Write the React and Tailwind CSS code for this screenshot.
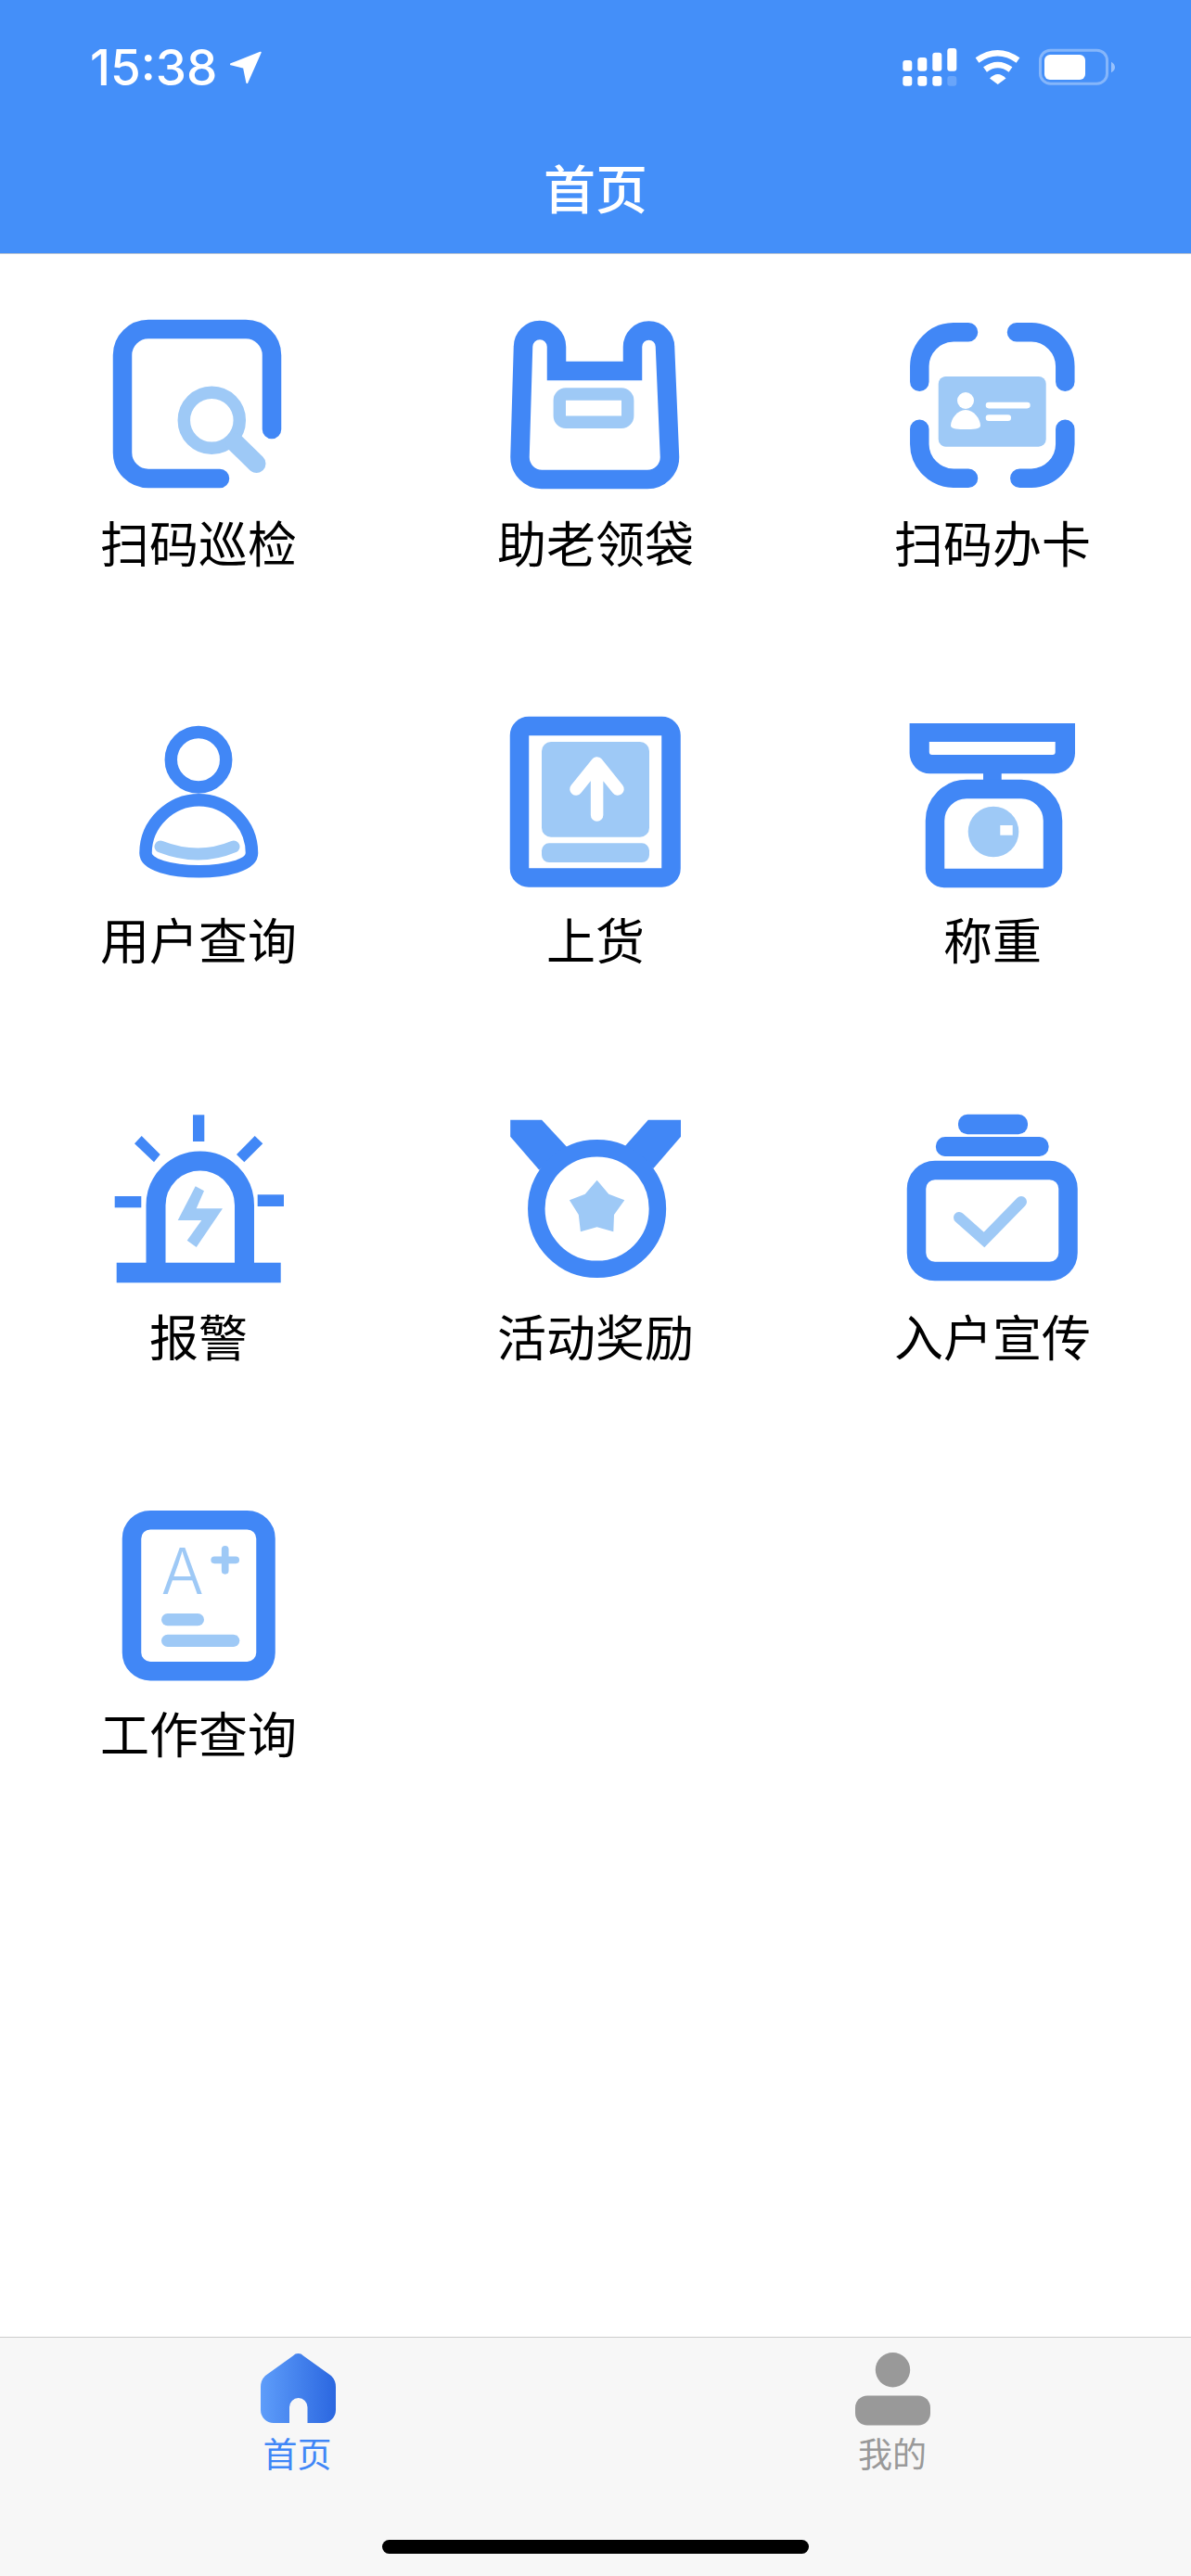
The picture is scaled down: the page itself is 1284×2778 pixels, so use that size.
const BLUE = "#4187f6";
const LIGHT = "#9ec9f6";

function IconFrame({ children }) {
  return (
    <svg viewBox="0 0 220 220" className="h-[220px] w-[220px] shrink-0" fill="none">
      {children}
    </svg>
  );
}

function ScanPatrolIcon() {
  return (
    <IconFrame>
      <path d="M189 133V53A28 28 0 0 0 161 25H56A28 28 0 0 0 28 53V158A28 28 0 0 0 56 186H133" stroke={BLUE} strokeWidth="20.5" strokeLinecap="round" />
      <circle cx="124.3" cy="123.3" r="30" stroke={LIGHT} strokeWidth="13.5" />
      <path d="M149 147L172.5 170" stroke={LIGHT} strokeWidth="20" strokeLinecap="round" />
    </IconFrame>
  );
}

function BagIcon() {
  return (
    <IconFrame>
      <path d="M150 70H68V44A18 18 0 0 0 32 44L28.5 163A24 24 0 0 0 52 187H166A24 24 0 0 0 190 163L185 44A17.5 17.5 0 0 0 150 44Z" stroke={BLUE} strokeWidth="20.5" />
      <rect x="71.3" y="95" width="73.4" height="30.3" rx="6.7" stroke={LIGHT} strokeWidth="13.4" />
    </IconFrame>
  );
}

function CardScanIcon() {
  return (
    <IconFrame>
      <g stroke={BLUE} strokeWidth="20.5" strokeLinecap="round">
        <path d="M31.3 81.7V65A37 37 0 0 1 68 28.3H84" />
        <path d="M136 28.3H152A37 37 0 0 1 188.3 65V81.7" />
        <path d="M31.3 132.7V149A37 37 0 0 0 68 185.7H84" />
        <path d="M139.3 185.7H152A37 37 0 0 0 188.3 149V132.7" />
      </g>
      <rect x="51.7" y="76" width="116" height="75.7" rx="8" fill={LIGHT} />
      <circle cx="81" cy="102" r="9" fill="#fff" />
      <path d="M81 112C90 112 97 122 97 129C97 133 88 133 81 133C74 133 65 133 65 129C65 122 72 112 81 112Z" fill="#fff" />
      <rect x="102.7" y="103.7" width="48" height="6.7" rx="3.3" fill="#fff" />
      <rect x="102.7" y="117.3" width="27.3" height="6.7" rx="3.3" fill="#fff" />
    </IconFrame>
  );
}

function UserIcon() {
  return (
    <IconFrame>
      <circle cx="110" cy="61.3" r="29.7" stroke={BLUE} strokeWidth="13.5" />
      <path d="M53 162C53 130 80 104.7 110.5 104.7C141 104.7 167.5 130 167.5 162C167.5 175 140 181.7 110.5 181.7C81 181.7 53 175 53 162Z" stroke={BLUE} strokeWidth="13.5" />
      <path d="M69 155Q110 171 148 155" stroke={LIGHT} strokeWidth="13" strokeLinecap="round" />
    </IconFrame>
  );
}

function UploadIcon() {
  return (
    <IconFrame>
      <rect x="28" y="25" width="163.5" height="163.5" rx="10" stroke={BLUE} strokeWidth="20.5" />
      <rect x="52" y="42" width="116" height="102.7" rx="10" fill={LIGHT} />
      <rect x="52" y="151.3" width="116" height="20.7" rx="8" fill={LIGHT} />
      <path d="M111.6 65V121M89 93L111.6 65L134 93" stroke="#fff" strokeWidth="13.5" strokeLinecap="round" strokeLinejoin="round" />
    </IconFrame>
  );
}

function ScaleIcon() {
  return (
    <IconFrame>
      <path fillRule="evenodd" clipRule="evenodd" d="M20.6 22H199V54A22 22 0 0 1 177 76.3H43A22 22 0 0 1 20.6 54ZM41.8 42V53A3 3 0 0 0 44.8 56H174.7A3 3 0 0 0 177.7 53V42Z" fill={BLUE} />
      <rect x="100" y="74" width="19.7" height="22" fill={BLUE} />
      <path d="M48 179V127A34 34 0 0 1 82 93H141A34 34 0 0 1 175 127V179A10 10 0 0 1 165 189H58A10 10 0 0 1 48 179Z" stroke={BLUE} strokeWidth="20.5" />
      <circle cx="111" cy="139" r="27.3" fill={LIGHT} />
      <rect x="118.3" y="132" width="13.4" height="10.7" fill="#fff" />
    </IconFrame>
  );
}

function AlarmIcon() {
  return (
    <IconFrame>
      <rect x="21.7" y="175.7" width="177" height="21.6" fill={BLUE} />
      <path d="M64 176V113.75A47.75 47.75 0 0 1 159.5 113.75V176" stroke={BLUE} strokeWidth="21" />
      <rect x="104" y="16.3" width="12.3" height="28.7" fill={BLUE} />
      <rect x="19.7" y="104" width="28.6" height="12.3" fill={BLUE} />
      <rect x="173.7" y="102.3" width="28.3" height="12.7" fill={BLUE} />
      <path d="M48.7 39L68.7 59L62 67.3L41 47.3Z" fill={BLUE} />
      <path d="M170.7 39L179.3 47.3L159.3 67.3L151 59Z" fill={BLUE} />
      <path d="M106.7 93.3L116 98.3L107.7 117.3H136L107.7 159L97.7 151.7L113.3 130H87.7Z" fill={LIGHT} />
    </IconFrame>
  );
}

function MedalIcon() {
  return (
    <IconFrame>
      <path d="M18.2 21.7H52.1L79 50.7L49.3 75.7L18.2 39.7Z" fill={BLUE} />
      <path d="M202 21.7H166.8L142 49.7L172.5 74L202 39.7Z" fill={BLUE} />
      <circle cx="111.6" cy="117.5" r="65.3" fill="#fff" stroke={BLUE} strokeWidth="18.5" />
      <path d="M111.6 86.7L124.3 101.7L141.3 108.3L130 124L129.3 142.3L111.6 137.3L93.9 142.3L91.8 124L81.9 108.3L98.8 101.7Z" fill={LIGHT} />
    </IconFrame>
  );
}

function PromoIcon() {
  return (
    <IconFrame>
      <rect x="73" y="15.7" width="75" height="21.6" rx="10" fill={BLUE} />
      <rect x="48.9" y="40" width="121.7" height="21" rx="10" fill={BLUE} />
      <rect x="28" y="76" width="163.5" height="109" rx="20" stroke={BLUE} strokeWidth="20.5" />
      <path d="M74 127L101 151L141 110" stroke={LIGHT} strokeWidth="12" strokeLinecap="round" />
    </IconFrame>
  );
}

function WorkIcon() {
  return (
    <IconFrame>
      <rect x="38" y="25.2" width="144.5" height="163" rx="20" stroke={BLUE} strokeWidth="20.5" />
      <text x="92.7" y="105" textAnchor="middle" fontFamily="Inter, sans-serif" fontWeight="300" fontSize="68" fill={LIGHT}>A</text>
      <path d="M127.2 68.3H150.2M138.7 56.8V79.8" stroke={LIGHT} strokeWidth="7.7" strokeLinecap="round" />
      <rect x="70" y="126" width="46" height="13.3" rx="6.7" fill={LIGHT} />
      <rect x="70" y="148.7" width="84.3" height="13.3" rx="6.7" fill={LIGHT} />
    </IconFrame>
  );
}

const entries = [
  { label: "扫码巡检", icon: ScanPatrolIcon },
  { label: "助老领袋", icon: BagIcon },
  { label: "扫码办卡", icon: CardScanIcon },
  { label: "用户查询", icon: UserIcon },
  { label: "上货", icon: UploadIcon },
  { label: "称重", icon: ScaleIcon },
  { label: "报警", icon: AlarmIcon },
  { label: "活动奖励", icon: MedalIcon },
  { label: "入户宣传", icon: PromoIcon },
  { label: "工作查询", icon: WorkIcon },
];

function StatusIcons() {
  return (
    <svg viewBox="0 0 234 50" className="h-[50px] w-[234px]" fill="none">
      <g fill="#fff">
        <rect x="3.3" y="17" width="10" height="11.7" rx="3" />
        <rect x="19.3" y="14" width="10" height="14.7" rx="3" />
        <rect x="35.3" y="8.7" width="10" height="20" rx="3" />
        <rect x="51.3" y="4" width="10" height="24.7" rx="3" />
        <rect x="3.3" y="34" width="10" height="10.7" rx="3" />
        <rect x="19.3" y="34" width="10" height="10.7" rx="3" />
        <rect x="35.3" y="34" width="10" height="10.7" rx="3" />
        <rect x="51.3" y="34" width="10" height="10.7" rx="3" fillOpacity="0.2" />
      </g>
      <path d="M83.5 17Q105.5 1.6 127.5 17M92 27Q105.7 17 119.5 27" stroke="#fff" strokeWidth="6.5" />
      <path d="M97 36.5Q105.7 27.5 114.5 36.5L105.7 43Z" fill="#fff" />
      <rect x="151.5" y="6.2" width="72" height="36" rx="11" stroke="#fff" strokeOpacity="0.35" strokeWidth="3" />
      <rect x="156" y="11" width="44" height="27" rx="6" fill="#fff" />
      <path d="M228 18.7Q232 21 232 24.5Q232 28 228 30.3Z" fill="#fff" fillOpacity="0.45" />
    </svg>
  );
}

function HomeTabIcon() {
  return (
    <svg viewBox="0 0 81 75" className="h-[75px] w-[81px]">
      <defs>
        <linearGradient id="home-fill" x1="0" y1="0" x2="1" y2="0">
          <stop offset="0" stopColor="#5e9dfa" />
          <stop offset="1" stopColor="#2b67e0" />
        </linearGradient>
      </defs>
      <path d="M35 2.5C38 -0.8 43 -0.8 46 2.5L76 24Q81 29 81 36V61A14 14 0 0 1 67 75H50.5V58A9.75 10 0 0 0 31 58V75H14A14 14 0 0 1 0 61V36Q0 29 5 24Z" fill="url(#home-fill)" />
    </svg>
  );
}

function MineTabIcon() {
  return (
    <svg viewBox="0 0 81 79" className="h-[79px] w-[81px]" fill="#999999">
      <circle cx="40.5" cy="18.7" r="18.7" />
      <rect x="0" y="46.5" width="81" height="32" rx="13" />
    </svg>
  );
}

export default function App() {
  return (
    <div className="flex h-[2778px] w-[1284px] flex-col bg-white font-['Noto_Sans_CJK_SC',sans-serif] text-black">
      <header className="h-[274px] shrink-0 border-b border-[#b9c4d2] bg-[#448ff9] text-white">
        <div className="flex h-[146px] items-center justify-between pl-[97px] pr-[80px]">
          <div className="flex items-center gap-[14px]">
            <span className="font-['Inter',sans-serif] text-[53px] font-medium leading-none">15:38</span>
            <svg viewBox="0 0 34 36" className="h-[36px] w-[34px]">
              <path d="M32.7 1.7L1 14.3L15 17.7L18.3 34Z" fill="#fff" stroke="#fff" strokeWidth="2" strokeLinejoin="round" />
            </svg>
          </div>
          <StatusIcons />
        </div>
        <h1 className="flex h-[110px] items-center justify-center text-[56px] font-medium">首页</h1>
      </header>

      <main className="grid flex-1 grid-cols-3 content-start">
        {entries.map(({ label, icon: Icon }) => (
          <div key={label} className="flex h-[428px] flex-col items-center pt-[56px]">
            <Icon />
            <span className="mt-[4px] text-[53px] leading-[60px]">{label}</span>
          </div>
        ))}
      </main>

      <footer className="relative grid h-[258px] shrink-0 grid-cols-2 border-t border-[#cccccc] bg-[#f7f7f7]">
        <div className="flex flex-col items-center pt-[17px] text-[#3f86f7]">
          <HomeTabIcon />
          <span className="mt-[7px] pr-[1px] text-[37px] leading-[50px]">首页</span>
        </div>
        <div className="flex flex-col items-center pr-[2px] pt-[16px] text-[#999999]">
          <MineTabIcon />
          <span className="mt-[4px] text-[37px] leading-[50px]">我的</span>
        </div>
        <div className="absolute bottom-[24px] left-[412px] h-[15px] w-[460px] rounded-full bg-black" />
      </footer>
    </div>
  );
}
